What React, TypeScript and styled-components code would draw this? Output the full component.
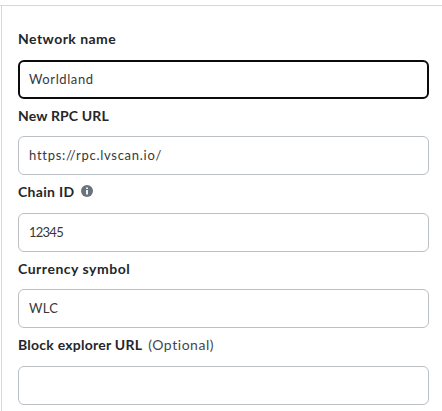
import React from 'react';
import styled, { createGlobalStyle } from 'styled-components';

const GlobalStyle = createGlobalStyle`
  * { box-sizing: border-box; }
  body { margin: 0; background: #fff; overflow: hidden; }
`;

const Page = styled.div`
  height: 411px;
  padding: 5px 0 0 1px;
  background: linear-gradient(#d6d9dc, #d6d9dc) 0 5px / 100% 1px no-repeat;
  font-family: Lato, 'Open Sans', sans-serif;
  color: #24272a;
`;

const Form = styled.form`
  height: 100%;
  margin-top: 1px;
  padding: 21px 13px 0 16px;
  border-left: 1px solid #d6d9dc;
`;

const Field = styled.div<{ $height: number }>`
  display: flex;
  flex-direction: column;
  justify-content: flex-end;
  height: ${p => p.$height}px;
`;

const Label = styled.label<{ $gap: number }>`
  display: flex;
  align-items: center;
  height: 24px;
  margin-bottom: ${p => p.$gap}px;
  font-size: 14px;
  line-height: 24px;
  white-space: nowrap;
`;

const Title = styled.span<{ $tracking: number }>`
  font-weight: 700;
  letter-spacing: ${p => p.$tracking}px;
`;

const Optional = styled.span`
  margin-left: 6px;
  color: #44484c;
  letter-spacing: 0.55px;
`;

const InfoIcon = styled.svg`
  width: 12px;
  height: 12px;
  margin: -2px 0 0 6.4px;
`;

const Input = styled.input<{ $active?: boolean; $tracking: number }>`
  width: 411px;
  height: 39px;
  margin: 0;
  padding: 0 ${p => (p.$active ? 9 : 10)}px 1px;
  border: ${p => (p.$active ? '2px solid #0b0b0e' : '1px solid #bbc0c5')};
  border-radius: 6px;
  outline: none;
  background: #fff;
  color: #36393c;
  font: 400 13px Lato, 'Open Sans', sans-serif;
  letter-spacing: ${p => p.$tracking}px;
`;

const Info = () => (
  <InfoIcon viewBox="0 0 12 12" aria-hidden="true">
    <circle cx="6" cy="6" r="6" fill="#6a737d" />
    <path d="M5.1 2.5h1.8v1.6H5.1zM5.1 5h1.8v4.4H5.1z" fill="#fff" />
  </InfoIcon>
);

const fields = [
  { id: 'name', label: 'Network name', value: 'Worldland', height: 72, gap: 9, track: 0.46, valueTrack: 0.6, active: true },
  { id: 'rpc', label: 'New RPC URL', value: 'https://rpc.lvscan.io/', height: 76, gap: 8, track: 0.15, valueTrack: 0.73 },
  { id: 'chain', label: 'Chain ID', value: '12345', height: 77, gap: 9, track: 0.32, valueTrack: -0.75, info: true },
  { id: 'symbol', label: 'Currency symbol', value: 'WLC', height: 76, gap: 8, track: 0.52, valueTrack: 0.3 },
  { id: 'explorer', label: 'Block explorer URL', value: '', height: 77, gap: 9, track: 0.24, valueTrack: 0, optional: true },
];

export default function App() {
  return (
    <>
      <GlobalStyle />
      <Page>
        <Form>
          {fields.map(f => (
            <Field key={f.id} $height={f.height}>
              <Label htmlFor={f.id} $gap={f.gap}>
                <Title $tracking={f.track}>{f.label}</Title>
                {f.info && <Info />}
                {f.optional && <Optional>(Optional)</Optional>}
              </Label>
              <Input id={f.id} defaultValue={f.value} $active={f.active} $tracking={f.valueTrack} />
            </Field>
          ))}
        </Form>
      </Page>
    </>
  );
}
